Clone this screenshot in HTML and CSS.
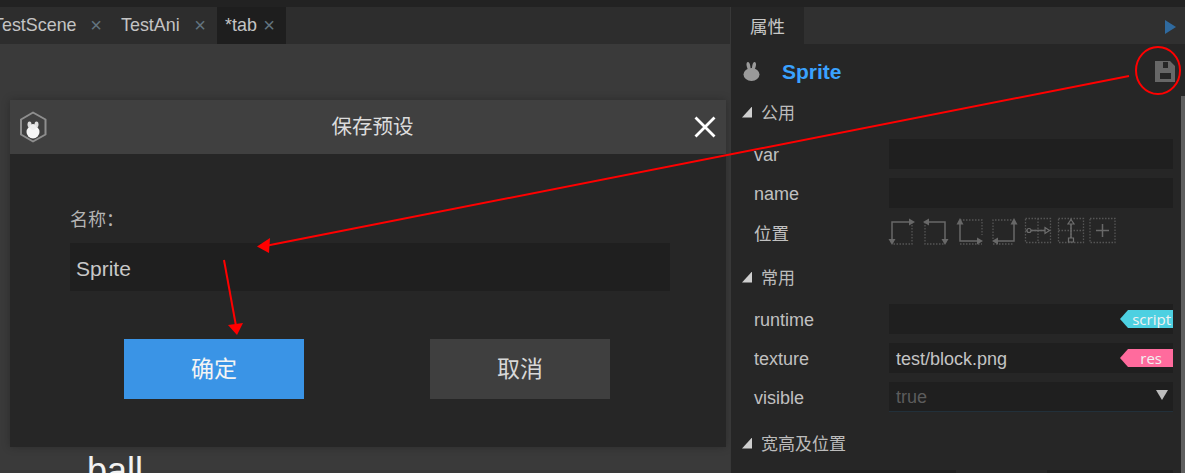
FILE: index.html
```html
<!DOCTYPE html>
<html lang="zh">
<head>
<meta charset="utf-8">
<title>保存预设</title>
<link rel="stylesheet" href="styles.css">
</head>
<body>
<div class="app">
  <div class="top-strip"></div>
  <div class="main">
    <section class="editor">
      <nav class="tabs">
        <div class="tab tab-scene"><span>TestScene</span><span class="tab-x">×</span></div>
        <div class="tab tab-ani"><span>TestAni</span><span class="tab-x">×</span></div>
        <div class="tab tab-active"><span>*tab</span><span class="tab-x">×</span></div>
      </nav>
      <div class="canvas">
        <div class="node-label">ball</div>
        <div class="dialog">
          <header class="dialog-head">
            <svg class="logo" width="32" height="34" viewBox="0 0 32 34">
              <path d="M15 2.5 L27.5 9.5 V24.5 L15 31.5 L3 24.5 V9.5 Z" fill="none" stroke="#8e8e8e" stroke-width="2" stroke-linejoin="round"/>
              <circle cx="15" cy="22" r="6.5" fill="#f6f6f6"/>
              <ellipse cx="11.5" cy="14.5" rx="2" ry="3" fill="#dedede"/>
              <ellipse cx="18.5" cy="14.5" rx="2" ry="3" fill="#dedede"/>
              <circle cx="15" cy="17" r="3" fill="#ececec"/>
            </svg>
            <h1 class="dialog-title">保存预设</h1>
            <svg class="close" width="22" height="22" viewBox="0 0 22 22">
              <path d="M1.5 1.5 L20.5 20.5 M20.5 1.5 L1.5 20.5" stroke="#fff" stroke-width="2.8" fill="none"/>
            </svg>
          </header>
          <div class="dialog-body">
            <label class="name-label">名称：</label>
            <div class="name-input">Sprite</div>
            <div class="dialog-actions">
              <button class="btn btn-primary">确定</button>
              <button class="btn btn-secondary">取消</button>
            </div>
          </div>
        </div>
      </div>
    </section>

    <aside class="props">
      <div class="props-tabs">
        <div class="props-tab">属性</div>
        <svg class="props-play" width="11" height="14" viewBox="0 0 11 14"><path d="M0 0 L11 7 L0 14 Z" fill="#2f6a9f"/></svg>
      </div>
      <div class="props-body">
        <div class="scrollbar"></div>
        <div class="props-head">
          <svg class="rabbit" width="17" height="19" viewBox="0 0 17 19">
            <ellipse cx="8.5" cy="12.5" rx="8" ry="6.5" fill="#9a9a9a"/>
            <ellipse cx="5.5" cy="4" rx="1.8" ry="4" fill="#9a9a9a" transform="rotate(-12 5.5 4)"/>
            <ellipse cx="11" cy="4" rx="1.8" ry="4" fill="#9a9a9a" transform="rotate(12 11 4)"/>
          </svg>
          <span class="props-name">Sprite</span>
          <svg class="save" width="20" height="21" viewBox="0 0 20 21">
            <path fill-rule="evenodd" fill="#676767" d="M0 0 H15 L20 5 V21 H0 Z M8 1 V7 H13 V1 Z M5 12 V18 H16 V12 Z"/>
          </svg>
        </div>

        <h2 class="section"><i class="tri"></i>公用</h2>
        <div class="row"><span class="label">var</span><div class="field"></div></div>
        <div class="row"><span class="label">name</span><div class="field"></div></div>
        <div class="row row-layout"><span class="label">位置</span>
          <svg class="align-icons" width="230" height="30" viewBox="0 0 230 30">
            <g class="dots">
              <path d="M24 5 V27 H5"/>
              <path d="M37 5 V27 H57"/>
              <path d="M72 3 H94 V18 M72 27 H94"/>
              <path d="M105 22 V3 H124 M105 27 H126"/>
              <rect x="137.5" y="1.5" width="25" height="24"/><path d="M150 1.5 V25.5 M137.5 13.5 H162.5"/>
              <rect x="170.5" y="1.5" width="25" height="24"/><path d="M183 1.5 V25.5 M170.5 13.5 H195.5"/>
              <rect x="202" y="1.5" width="25" height="24"/>
            </g>
            <g class="solid">
              <path d="M4 24 V5 H24"/>
              <path d="M37 5 H57 V24"/>
              <path d="M72 6 V24 H92"/>
              <path d="M126 7 V24 H107"/>
              <path d="M143 13.5 H157"/>
              <path d="M183 6 V21"/>
              <path d="M208 13.5 H221 M214.5 7 V20"/>
            </g>
            <g class="heads">
              <path d="M21 1.5 L27 5 L21 8.5 Z"/><path d="M0.5 22 H7.5 L4 28 Z"/>
              <path d="M41 1.5 L35 5 L41 8.5 Z"/><path d="M53.5 22 H60.5 L57 28 Z"/>
              <path d="M72 1 L75.5 7.5 H68.5 Z"/><path d="M89 20.5 L95 24 L89 27.5 Z"/>
              <path d="M126 1 L129.5 7.5 H122.5 Z"/><path d="M110 20.5 L104 24 L110 27.5 Z"/>
            </g>
            <g class="hollow">
              <circle cx="141" cy="13.5" r="2"/><path d="M157 10.5 L161.5 13.5 L157 16.5 Z"/>
              <path d="M183 2.5 L186 7 H180 Z"/><path d="M180.5 21 H185.5 V25 H180.5 Z"/>
            </g>
          </svg>
        </div>

        <h2 class="section"><i class="tri"></i>常用</h2>
        <div class="row"><span class="label">runtime</span>
          <div class="field"><span class="tag tag-script">script</span></div></div>
        <div class="row"><span class="label">texture</span>
          <div class="field"><span class="field-text">test/block.png</span><span class="tag tag-res">res</span></div></div>
        <div class="row row-last"><span class="label">visible</span>
          <div class="field field-select"><span class="field-text field-muted">true</span><i class="caret"></i></div></div>

        <h2 class="section"><i class="tri"></i>宽高及位置</h2>
        <div class="half-row"><div class="half"></div><div class="half"></div></div>
      </div>
    </aside>
  </div>

  <svg class="annotations" width="1185" height="473" viewBox="0 0 1185 473">
    <ellipse cx="1158" cy="70.5" rx="22" ry="23.5" fill="none" stroke="#ff0000" stroke-width="2"/>
    <path d="M1129 76 L265 246" stroke="#ff0000" stroke-width="2" fill="none"/>
    <path d="M257 246.5 L270 238 L269 253 Z" fill="#ff0000"/>
    <path d="M224 260 L236 326" stroke="#ff0000" stroke-width="2" fill="none"/>
    <path d="M237 335 L228 325 L243 323 Z" fill="#ff0000"/>
  </svg>
</div>
</body>
</html>
```
FILE: styles.css
```css
* { box-sizing: border-box; }
html, body { margin: 0; padding: 0; background: #222; }
body { font-family: "Liberation Sans", "Noto Sans CJK SC", sans-serif; color: #c4c4c4; }
.app { position: relative; width: 1185px; height: 473px; overflow: hidden; display: flex; flex-direction: column; }
.top-strip { height: 7px; background: #222; flex: none; }
.main { flex: 1; display: flex; min-height: 0; }

/* editor */
.editor { width: 730px; flex: none; display: flex; flex-direction: column; }
.tabs { height: 37px; background: #2d2d2d; display: flex; flex: none; }
.tab { height: 37px; padding: 0 11px 1px 8px; display: flex; align-items: center; justify-content: space-between; font-size: 17.9px; color: #c4c4c4; }
.tab-scene { width: 128px; margin-left: -15px; flex: none; }
.tab-ani { width: 104px; flex: none; }
.tab-active { width: 69px; flex: none; background: #1e1e1e; }
.tab-x { font-size: 20px; color: #62747f; line-height: 1; }
.canvas { flex: 1; position: relative; background: #3a3a3a; overflow: hidden; }
.node-label { position: absolute; left: 87px; top: 407px; font-size: 36px; line-height: 40px; color: #f2f2f2; }

/* dialog */
.dialog { position: absolute; left: 10px; top: 56px; width: 716px; height: 347px; background: #262626; box-shadow: 0 0 8px rgba(0,0,0,.25); display: flex; flex-direction: column; }
.dialog-head { height: 54px; flex: none; background: #404040; display: grid; grid-template-columns: 1fr auto 1fr; align-items: center; padding: 0 10px 0 8px; }
.logo { display: block; }
.dialog-title { margin: 0 0 0 11px; padding-bottom: 4px; font: 400 20.5px/1 "Noto Sans CJK SC", sans-serif; color: #dcdcdc; }
.close { justify-self: end; display: block; }
.dialog-body { flex: 1; padding: 50px 0 0 60px; }
.name-label { display: block; height: 28px; font: 400 18px/28px "Noto Sans CJK SC", sans-serif; color: #b4b4b4; margin-bottom: 11px; }
.name-input { width: 600px; height: 48px; background: #1f1f1f; padding: 3px 0 0 6px; line-height: 45px; font-size: 21px; color: #c8c8c8; margin-bottom: 48px; }
.dialog-actions { display: flex; gap: 126px; margin-left: 54px; }
.btn { width: 180px; height: 60px; border: 0; padding: 0 0 4px; font: 400 23px "Noto Sans CJK SC", sans-serif; }
.btn-primary { background: #3a94e6; color: #f4f4f4; }
.btn-secondary { background: #3f3f3f; color: #d8d8d8; }

/* properties */
.props { flex: 1; min-width: 0; border-left: 1px solid #383838; background: #262626; display: flex; flex-direction: column; }
.props-tabs { height: 37px; flex: none; background: #303030; display: flex; align-items: center; justify-content: space-between; padding-right: 9px; }
.props-tab { width: 73px; height: 37px; background: #262626; padding-left: 19px; font: 400 17.5px/37px "Noto Sans CJK SC", sans-serif; color: #c8c8c8; }
.props-play { display: block; margin-top: 3px; }
.props-body { flex: 1; position: relative; padding-right: 12px; }
.scrollbar { position: absolute; right: 0; top: 52px; bottom: 0; width: 4px; background: #5e5e5e; }
.props-head { height: 54px; display: flex; align-items: center; padding: 0 0 0 12px; }
.rabbit { display: block; }
.props-name { margin-left: 22px; padding-top: 2px; font-size: 21px; font-weight: 700; color: #3aa2ff; }
.save { margin-left: auto; margin-right: -2px; display: block; }
.section { height: 30px; margin: 0 0 11px; padding: 0 0 2px 11px; display: flex; align-items: center; gap: 9px; font: 400 17px/28px "Noto Sans CJK SC", sans-serif; color: #bcbcbc; }
.tri { width: 10px; height: 11px; background: #cfcfcf; clip-path: polygon(100% 0, 100% 100%, 0 100%); display: block; flex: none; }
.row { display: grid; grid-template-columns: 135px 1fr; margin: 0 0 9px 23px; height: 30px; align-items: center; }
.row-layout { height: 37px; align-items: start; }
.row-layout .label { padding-top: 3px; line-height: 26px; font-family: "Noto Sans CJK SC", sans-serif; font-size: 17.5px; }
.row-last { margin-bottom: 17px; }
.label { padding-top: 3px; font-size: 18px; color: #c0c0c0; }
.field { height: 30px; background: #1f1f1f; display: flex; align-items: center; justify-content: space-between; }
.field-text { padding: 2px 0 0 7px; font-size: 18px; color: #c4c4c4; }
.field-muted { color: #5c5c5c; }
.field-select { border-bottom: 1px solid #22303a; }
.align-icons { display: block; margin-left: -1px; }
.dots path, .dots rect { fill: none; stroke: #555; stroke-width: 1.3; stroke-dasharray: 1.5 1.5; }
.solid path { fill: none; stroke: #686868; stroke-width: 1.5; }
.heads path { fill: #686868; }
.hollow path, .hollow circle { fill: #262626; stroke: #6e6e6e; stroke-width: 1.2; }
.tag { margin-left: auto; height: 18px; width: 53px; line-height: 18px; font-family: "Open Sans", sans-serif; font-size: 15px; text-align: right; padding-right: 2px; color: #f2f2f2; clip-path: polygon(8px 0, 100% 0, 100% 100%, 8px 100%, 0 50%); }
.tag-script { background: #4dd0e1; }
.tag-res { background: #ff6b9d; padding-right: 11px; }
.caret { margin-right: 5px; width: 12px; height: 10px; background: #bdbdbd; clip-path: polygon(0 0, 100% 0, 50% 100%); display: block; margin-top: -3px; }
.half-row { display: flex; justify-content: space-between; margin-left: 99px; }
.half { width: 126px; height: 30px; background: #1f1f1f; }

.annotations { position: absolute; left: 0; top: 0; pointer-events: none; }
```
